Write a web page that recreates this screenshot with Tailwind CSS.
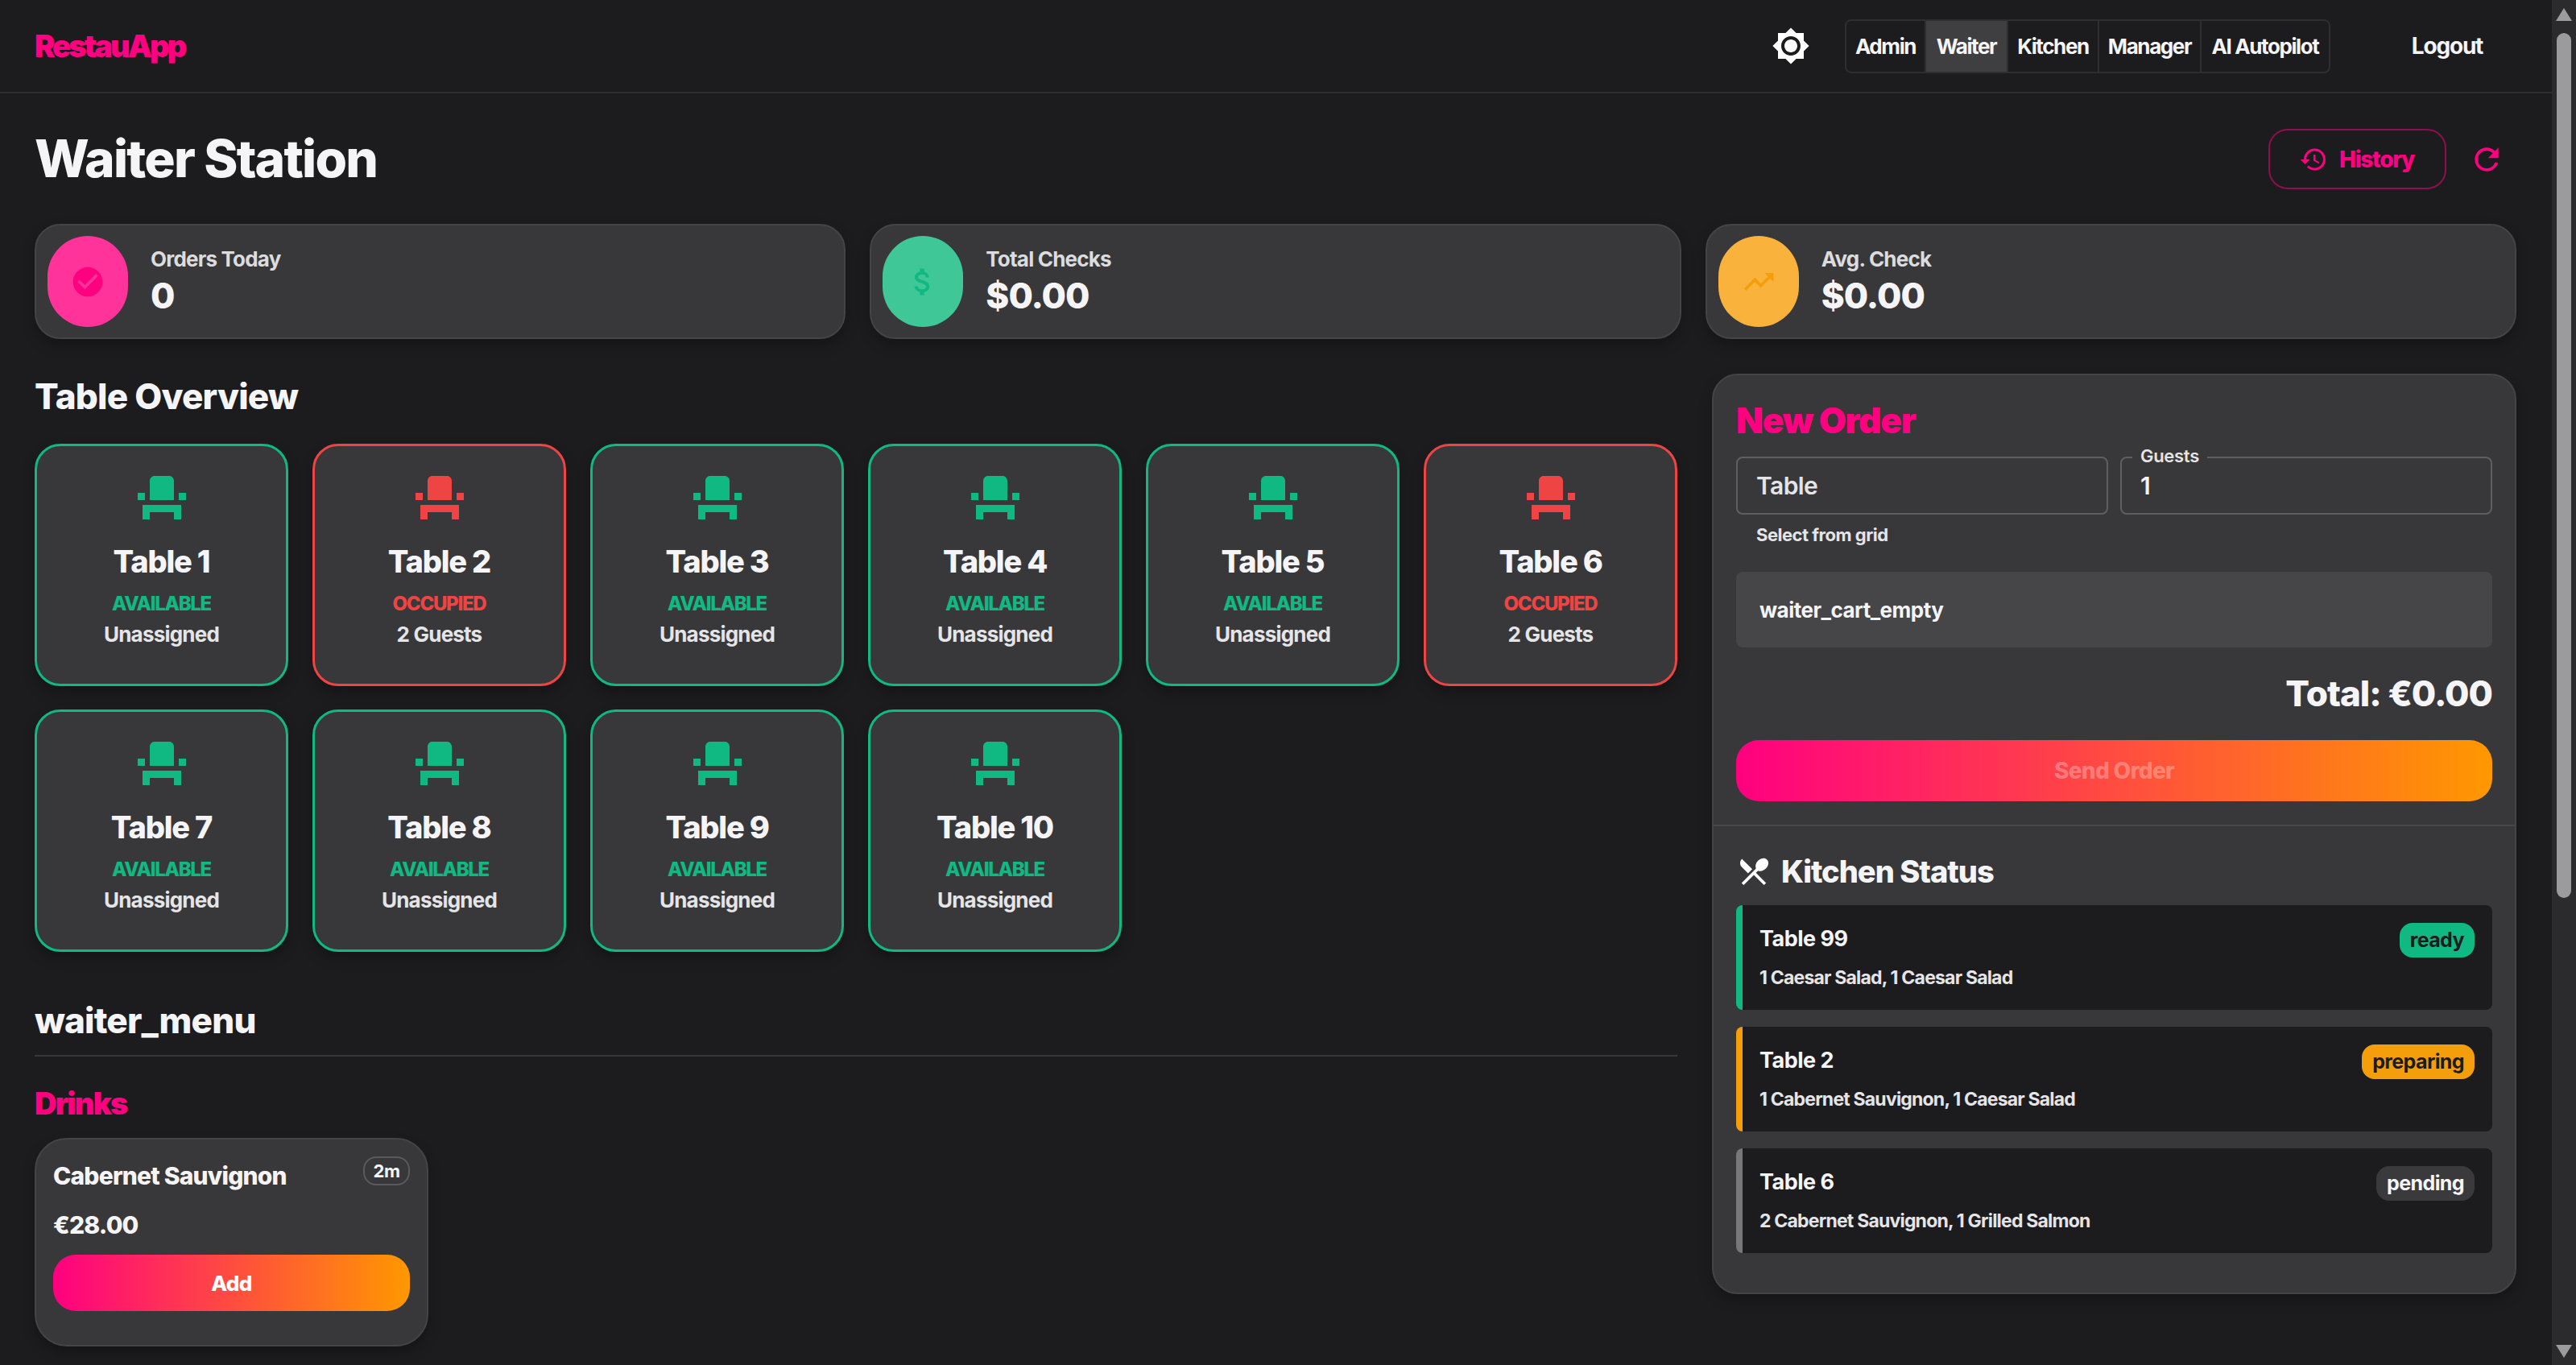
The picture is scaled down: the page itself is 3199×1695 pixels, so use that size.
<!DOCTYPE html>
<html lang="en">
<head>
<meta charset="utf-8">
<title>RestauApp</title>
<script src="https://cdn.jsdelivr.net/npm/@tailwindcss/browser@4"></script>
</head>
<body class="m-0 flex h-[1695px] w-[3199px] overflow-hidden bg-[#1c1c1e] font-['Inter',sans-serif] text-[#f5f5f7]">
<div class="w-[3169px] shrink-0">
  <header class="flex h-[116px] items-center justify-between border-b-2 border-[#2e2e30] pl-[43px] pr-[44px]">
    <div class="text-[38px] font-black leading-[48px] tracking-[-2.9px] text-[#ff0080]">RestauApp</div>
    <div class="flex items-center">
      <svg class="h-[48px] w-[48px] fill-white" viewBox="0 0 24 24"><path d="M20 8.69V4h-4.69L12 .69 8.69 4H4v4.69L.69 12 4 15.31V20h4.69L12 23.31 15.31 20H20v-4.69L23.31 12 20 8.69zM12 18c-3.31 0-6-2.69-6-6s2.69-6 6-6 6 2.69 6 6-2.69 6-6 6zm0-10c-2.21 0-4 1.79-4 4s1.79 4 4 4 4-1.79 4-4-1.79-4-4-4z"/></svg>
      <div class="ml-[43px] flex h-[67px] items-stretch overflow-hidden rounded-[8px] border-2 border-[#2e2e30] text-[26px] font-bold tracking-[-1.4px]">
        <div class="flex w-[97px] items-center justify-center">Admin</div>
        <div class="flex w-[104px] items-center justify-center border-x-2 border-[#2e2e30] bg-[#3f3f41]">Waiter</div>
        <div class="flex w-[113px] items-center justify-center border-r-2 border-[#2e2e30]">Kitchen</div>
        <div class="flex w-[127px] items-center justify-center border-r-2 border-[#2e2e30]">Manager</div>
        <div class="flex w-[158px] items-center justify-center">AI Autopilot</div>
      </div>
      <div class="ml-[59px] w-[172px] text-center text-[28px] font-bold tracking-[-1.2px]">Logout</div>
    </div>
  </header>

  <main class="pl-[43px] pr-[44px] pt-[44px]">
    <div class="flex h-[75px] items-center justify-between">
      <h1 class="mb-[3px] text-[64px] font-extrabold leading-[75px] tracking-[-1.8px]">Waiter Station</h1>
      <div class="flex items-center pr-[15px]">
        <div class="flex h-[75px] w-[221px] items-center gap-[14px] rounded-[24px] border-2 border-[#ff0080]/50 pl-[36px] text-[28px] font-extrabold tracking-[-1.3px] text-[#ff0080]">
          <svg class="h-[36px] w-[36px] fill-[#ff0080]" viewBox="0 0 24 24"><path d="M13 3c-4.97 0-9 4.03-9 9H1l3.89 3.89.07.14L9 12H6c0-3.87 3.13-7 7-7s7 3.13 7 7-3.13 7-7 7c-1.93 0-3.68-.79-4.94-2.06l-1.42 1.42C8.27 19.99 10.51 21 13 21c4.97 0 9-4.03 9-9s-4.03-9-9-9zm-1 5v5l4.28 2.54.72-1.21-3.5-2.08V8H12z"/></svg>
          History
        </div>
        <svg class="ml-[28px] h-[44px] w-[44px] fill-[#ff0080]" viewBox="0 0 24 24"><path d="M17.65 6.35C16.2 4.9 14.21 4 12 4c-4.42 0-7.99 3.58-7.99 8s3.57 8 7.99 8c3.73 0 6.84-2.55 7.73-6h-2.08c-.82 2.33-3.04 4-5.65 4-3.31 0-6-2.69-6-6s2.69-6 6-6c1.66 0 3.14.69 4.22 1.78L13 11h7V4l-2.35 2.35z"/></svg>
      </div>
    </div>

    <div class="mt-[43px] grid grid-cols-3 gap-[30px]">
      <div class="flex h-[143px] items-stretch gap-[28px] rounded-[32px] border-2 border-[#444446] bg-[#38383a] px-[14px] py-[13px] shadow-[0_8px_16px_rgba(0,0,0,0.25)]">
        <div class="flex w-[100px] items-center justify-center rounded-full bg-[#ff3399]">
          <svg class="h-[44px] w-[44px] fill-[#ff0080]" viewBox="0 0 24 24"><path d="M12 2C6.48 2 2 6.48 2 12s4.48 10 10 10 10-4.48 10-10S17.52 2 12 2zm-2 15-5-5 1.41-1.41L10 14.17l7.59-7.59L19 8l-9 9z"/></svg>
        </div>
        <div class="flex flex-col justify-center pb-[2px]">
          <div class="text-[26px] font-bold leading-[34px] tracking-[-0.8px] text-[#dcdcde]">Orders Today</div>
          <div class="mt-[2px] text-[44px] font-extrabold leading-[52px] tracking-[-1px]">0</div>
        </div>
      </div>
      <div class="flex h-[143px] items-stretch gap-[28px] rounded-[32px] border-2 border-[#444446] bg-[#38383a] px-[14px] py-[13px] shadow-[0_8px_16px_rgba(0,0,0,0.25)]">
        <div class="flex w-[100px] items-center justify-center rounded-full bg-[#40c797]">
          <svg class="h-[44px] w-[44px] fill-[#10b981]" viewBox="0 0 24 24"><path d="M11.8 10.9c-2.27-.59-3-1.2-3-2.15 0-1.09 1.01-1.85 2.7-1.85 1.78 0 2.44.85 2.5 2.1h2.21c-.07-1.72-1.12-3.3-3.21-3.81V3h-3v2.16c-1.94.42-3.5 1.68-3.5 3.61 0 2.31 1.91 3.46 4.7 4.13 2.5.6 3 1.48 3 2.41 0 .69-.49 1.79-2.7 1.79-2.06 0-2.87-.92-2.98-2.1h-2.2c.12 2.19 1.76 3.42 3.68 3.83V21h3v-2.15c1.95-.37 3.5-1.5 3.5-3.55 0-2.84-2.43-3.81-4.7-4.4z"/></svg>
        </div>
        <div class="flex flex-col justify-center pb-[2px]">
          <div class="text-[26px] font-bold leading-[34px] tracking-[-0.8px] text-[#dcdcde]">Total Checks</div>
          <div class="mt-[2px] text-[44px] font-extrabold leading-[52px] tracking-[-1px]">$0.00</div>
        </div>
      </div>
      <div class="flex h-[143px] items-stretch gap-[28px] rounded-[32px] border-2 border-[#444446] bg-[#38383a] px-[14px] py-[13px] shadow-[0_8px_16px_rgba(0,0,0,0.25)]">
        <div class="flex w-[100px] items-center justify-center rounded-full bg-[#f9b23c]">
          <svg class="h-[44px] w-[44px] fill-[#f59e0b]" viewBox="0 0 24 24"><path d="m16 6 2.29 2.29-4.88 4.88-4-4L2 16.59 3.41 18l6-6 4 4 6.3-6.29L22 12V6z"/></svg>
        </div>
        <div class="flex flex-col justify-center pb-[2px]">
          <div class="text-[26px] font-bold leading-[34px] tracking-[-0.8px] text-[#dcdcde]">Avg. Check</div>
          <div class="mt-[2px] text-[44px] font-extrabold leading-[52px] tracking-[-1px]">$0.00</div>
        </div>
      </div>
    </div>

    <div class="mt-[43px] grid grid-cols-[2040px_999px] gap-[43px]">
      <section>
        <h2 class="text-[44px] font-extrabold leading-[56px] tracking-[-0.8px]">Table Overview</h2>
        <div class="mt-[31px] grid grid-cols-6 gap-x-[30px] gap-y-[29px]">
          <div class="flex h-[301px] flex-col items-center rounded-[32px] border-[3px] border-[#10b981] bg-[#38383a] pt-[28px] shadow-[0_8px_16px_rgba(0,0,0,0.25)]">
            <svg class="h-[72px] w-[72px] fill-[#10b981]" viewBox="0 0 24 24"><path d="M4 18v3h3v-3h10v3h3v-6H4zm15-8h3v3h-3zM2 10h3v3H2zm15 3H7V5c0-1.1.9-2 2-2h6c1.1 0 2 .9 2 2v8z"/></svg>
            <div class="mt-[19px] text-[38px] font-extrabold leading-[48px] tracking-[-1.2px]">Table 1</div>
            <div class="mt-[13px] text-[24px] font-extrabold leading-[32px] tracking-[-1.3px] text-[#10b981]">AVAILABLE</div>
            <div class="mt-[4px] text-[26px] font-bold leading-[36px] tracking-[-0.8px] text-[#e5e5e7]">Unassigned</div>
          </div>
          <div class="flex h-[301px] flex-col items-center rounded-[32px] border-[3px] border-[#ef4444] bg-[#38383a] pt-[28px] shadow-[0_8px_16px_rgba(0,0,0,0.25)]">
            <svg class="h-[72px] w-[72px] fill-[#ef4444]" viewBox="0 0 24 24"><path d="M4 18v3h3v-3h10v3h3v-6H4zm15-8h3v3h-3zM2 10h3v3H2zm15 3H7V5c0-1.1.9-2 2-2h6c1.1 0 2 .9 2 2v8z"/></svg>
            <div class="mt-[19px] text-[38px] font-extrabold leading-[48px] tracking-[-1.2px]">Table 2</div>
            <div class="mt-[13px] text-[24px] font-extrabold leading-[32px] tracking-[-1.3px] text-[#ef4444]">OCCUPIED</div>
            <div class="mt-[4px] text-[26px] font-bold leading-[36px] tracking-[-0.8px] text-[#e5e5e7]">2 Guests</div>
          </div>
          <div class="flex h-[301px] flex-col items-center rounded-[32px] border-[3px] border-[#10b981] bg-[#38383a] pt-[28px] shadow-[0_8px_16px_rgba(0,0,0,0.25)]">
            <svg class="h-[72px] w-[72px] fill-[#10b981]" viewBox="0 0 24 24"><path d="M4 18v3h3v-3h10v3h3v-6H4zm15-8h3v3h-3zM2 10h3v3H2zm15 3H7V5c0-1.1.9-2 2-2h6c1.1 0 2 .9 2 2v8z"/></svg>
            <div class="mt-[19px] text-[38px] font-extrabold leading-[48px] tracking-[-1.2px]">Table 3</div>
            <div class="mt-[13px] text-[24px] font-extrabold leading-[32px] tracking-[-1.3px] text-[#10b981]">AVAILABLE</div>
            <div class="mt-[4px] text-[26px] font-bold leading-[36px] tracking-[-0.8px] text-[#e5e5e7]">Unassigned</div>
          </div>
          <div class="flex h-[301px] flex-col items-center rounded-[32px] border-[3px] border-[#10b981] bg-[#38383a] pt-[28px] shadow-[0_8px_16px_rgba(0,0,0,0.25)]">
            <svg class="h-[72px] w-[72px] fill-[#10b981]" viewBox="0 0 24 24"><path d="M4 18v3h3v-3h10v3h3v-6H4zm15-8h3v3h-3zM2 10h3v3H2zm15 3H7V5c0-1.1.9-2 2-2h6c1.1 0 2 .9 2 2v8z"/></svg>
            <div class="mt-[19px] text-[38px] font-extrabold leading-[48px] tracking-[-1.2px]">Table 4</div>
            <div class="mt-[13px] text-[24px] font-extrabold leading-[32px] tracking-[-1.3px] text-[#10b981]">AVAILABLE</div>
            <div class="mt-[4px] text-[26px] font-bold leading-[36px] tracking-[-0.8px] text-[#e5e5e7]">Unassigned</div>
          </div>
          <div class="flex h-[301px] flex-col items-center rounded-[32px] border-[3px] border-[#10b981] bg-[#38383a] pt-[28px] shadow-[0_8px_16px_rgba(0,0,0,0.25)]">
            <svg class="h-[72px] w-[72px] fill-[#10b981]" viewBox="0 0 24 24"><path d="M4 18v3h3v-3h10v3h3v-6H4zm15-8h3v3h-3zM2 10h3v3H2zm15 3H7V5c0-1.1.9-2 2-2h6c1.1 0 2 .9 2 2v8z"/></svg>
            <div class="mt-[19px] text-[38px] font-extrabold leading-[48px] tracking-[-1.2px]">Table 5</div>
            <div class="mt-[13px] text-[24px] font-extrabold leading-[32px] tracking-[-1.3px] text-[#10b981]">AVAILABLE</div>
            <div class="mt-[4px] text-[26px] font-bold leading-[36px] tracking-[-0.8px] text-[#e5e5e7]">Unassigned</div>
          </div>
          <div class="flex h-[301px] flex-col items-center rounded-[32px] border-[3px] border-[#ef4444] bg-[#38383a] pt-[28px] shadow-[0_8px_16px_rgba(0,0,0,0.25)]">
            <svg class="h-[72px] w-[72px] fill-[#ef4444]" viewBox="0 0 24 24"><path d="M4 18v3h3v-3h10v3h3v-6H4zm15-8h3v3h-3zM2 10h3v3H2zm15 3H7V5c0-1.1.9-2 2-2h6c1.1 0 2 .9 2 2v8z"/></svg>
            <div class="mt-[19px] text-[38px] font-extrabold leading-[48px] tracking-[-1.2px]">Table 6</div>
            <div class="mt-[13px] text-[24px] font-extrabold leading-[32px] tracking-[-1.3px] text-[#ef4444]">OCCUPIED</div>
            <div class="mt-[4px] text-[26px] font-bold leading-[36px] tracking-[-0.8px] text-[#e5e5e7]">2 Guests</div>
          </div>
          <div class="flex h-[301px] flex-col items-center rounded-[32px] border-[3px] border-[#10b981] bg-[#38383a] pt-[28px] shadow-[0_8px_16px_rgba(0,0,0,0.25)]">
            <svg class="h-[72px] w-[72px] fill-[#10b981]" viewBox="0 0 24 24"><path d="M4 18v3h3v-3h10v3h3v-6H4zm15-8h3v3h-3zM2 10h3v3H2zm15 3H7V5c0-1.1.9-2 2-2h6c1.1 0 2 .9 2 2v8z"/></svg>
            <div class="mt-[19px] text-[38px] font-extrabold leading-[48px] tracking-[-1.2px]">Table 7</div>
            <div class="mt-[13px] text-[24px] font-extrabold leading-[32px] tracking-[-1.3px] text-[#10b981]">AVAILABLE</div>
            <div class="mt-[4px] text-[26px] font-bold leading-[36px] tracking-[-0.8px] text-[#e5e5e7]">Unassigned</div>
          </div>
          <div class="flex h-[301px] flex-col items-center rounded-[32px] border-[3px] border-[#10b981] bg-[#38383a] pt-[28px] shadow-[0_8px_16px_rgba(0,0,0,0.25)]">
            <svg class="h-[72px] w-[72px] fill-[#10b981]" viewBox="0 0 24 24"><path d="M4 18v3h3v-3h10v3h3v-6H4zm15-8h3v3h-3zM2 10h3v3H2zm15 3H7V5c0-1.1.9-2 2-2h6c1.1 0 2 .9 2 2v8z"/></svg>
            <div class="mt-[19px] text-[38px] font-extrabold leading-[48px] tracking-[-1.2px]">Table 8</div>
            <div class="mt-[13px] text-[24px] font-extrabold leading-[32px] tracking-[-1.3px] text-[#10b981]">AVAILABLE</div>
            <div class="mt-[4px] text-[26px] font-bold leading-[36px] tracking-[-0.8px] text-[#e5e5e7]">Unassigned</div>
          </div>
          <div class="flex h-[301px] flex-col items-center rounded-[32px] border-[3px] border-[#10b981] bg-[#38383a] pt-[28px] shadow-[0_8px_16px_rgba(0,0,0,0.25)]">
            <svg class="h-[72px] w-[72px] fill-[#10b981]" viewBox="0 0 24 24"><path d="M4 18v3h3v-3h10v3h3v-6H4zm15-8h3v3h-3zM2 10h3v3H2zm15 3H7V5c0-1.1.9-2 2-2h6c1.1 0 2 .9 2 2v8z"/></svg>
            <div class="mt-[19px] text-[38px] font-extrabold leading-[48px] tracking-[-1.2px]">Table 9</div>
            <div class="mt-[13px] text-[24px] font-extrabold leading-[32px] tracking-[-1.3px] text-[#10b981]">AVAILABLE</div>
            <div class="mt-[4px] text-[26px] font-bold leading-[36px] tracking-[-0.8px] text-[#e5e5e7]">Unassigned</div>
          </div>
          <div class="flex h-[301px] flex-col items-center rounded-[32px] border-[3px] border-[#10b981] bg-[#38383a] pt-[28px] shadow-[0_8px_16px_rgba(0,0,0,0.25)]">
            <svg class="h-[72px] w-[72px] fill-[#10b981]" viewBox="0 0 24 24"><path d="M4 18v3h3v-3h10v3h3v-6H4zm15-8h3v3h-3zM2 10h3v3H2zm15 3H7V5c0-1.1.9-2 2-2h6c1.1 0 2 .9 2 2v8z"/></svg>
            <div class="mt-[19px] text-[38px] font-extrabold leading-[48px] tracking-[-1.2px]">Table 10</div>
            <div class="mt-[13px] text-[24px] font-extrabold leading-[32px] tracking-[-1.3px] text-[#10b981]">AVAILABLE</div>
            <div class="mt-[4px] text-[26px] font-bold leading-[36px] tracking-[-0.8px] text-[#e5e5e7]">Unassigned</div>
          </div>
        </div>

        <h2 class="mt-[57px] border-b-2 border-[#38383a] pb-[15px] text-[44px] font-extrabold leading-[56px] tracking-[-0.8px]">waiter_menu</h2>
        <h3 class="mt-[34px] text-[38px] font-black leading-[48px] tracking-[-1.8px] text-[#ff0080]">Drinks</h3>
        <div class="mt-[19px] h-[259px] w-[489px] rounded-[40px] border-2 border-[#444446] bg-[#38383a] px-[21px] pt-[21px] shadow-[0_8px_16px_rgba(0,0,0,0.25)]">
          <div class="flex items-start justify-between">
            <div class="mt-[4px] text-[30px] font-extrabold leading-[40px] tracking-[-0.8px]">Cabernet Sauvignon</div>
            <div class="flex h-[36px] w-[58px] items-center justify-center rounded-[16px] border-2 border-[#5a5a5c] text-[22px] font-bold tracking-[-0.5px]">2m</div>
          </div>
          <div class="mt-[21px] text-[30px] font-extrabold leading-[40px] tracking-[-0.8px]">€28.00</div>
          <div class="mt-[17px] flex h-[70px] items-center justify-center rounded-[28px] bg-[linear-gradient(90deg,#ff0080,#ff9800)] text-[26px] font-extrabold tracking-[-0.6px] text-white">Add</div>
        </div>
      </section>

      <aside class="h-[1143px] rounded-[32px] border-2 border-[#444446] bg-[#38383a] shadow-[0_8px_16px_rgba(0,0,0,0.25)]">
        <div class="px-[28px] pt-[28px]">
          <h2 class="text-[44px] font-black leading-[56px] tracking-[-1.2px] text-[#ff0080]">New Order</h2>
          <div class="mt-[17px] grid grid-cols-2 gap-[15px]">
            <div class="flex h-[72px] items-center rounded-[8px] border-2 border-[#5f5f61] pl-[23px] text-[30px] font-semibold tracking-[-0.6px] text-[#e5e5e7]">Table</div>
            <div class="relative flex h-[72px] items-center rounded-[8px] border-2 border-[#5f5f61] pl-[23px] text-[30px] font-semibold">1
              <span class="absolute left-[13px] top-[-17px] bg-[#38383a] px-[10px] text-[22px] font-semibold leading-[28px] tracking-[-0.3px] text-[#e5e5e7]">Guests</span>
            </div>
          </div>
          <div class="mt-[9px] pl-[25px] text-[22px] font-bold leading-[32px] tracking-[-0.5px] text-[#e5e5e7]">Select from grid</div>
          <div class="mt-[30px] flex h-[94px] items-center rounded-[8px] bg-[#464648] pl-[29px] text-[26px] font-bold tracking-[-0.5px]">waiter_cart_empty</div>
          <div class="mt-[29px] text-right text-[44px] font-extrabold leading-[56px] tracking-[-1px]">Total: €0.00</div>
          <div class="mt-[30px] flex h-[76px] items-center justify-center rounded-[28px] bg-[linear-gradient(90deg,#ff0080,#ff9800)] text-[28px] font-extrabold tracking-[-0.7px] text-white/30">Send Order</div>
        </div>
        <div class="mt-[29px] border-t-2 border-[#48484a] px-[28px] pt-[32px]">
          <div class="flex items-center gap-[12px] text-[38px] font-extrabold leading-[48px] tracking-[-1px]">
            <svg class="h-[44px] w-[44px] fill-white" viewBox="0 0 24 24"><path d="m8.1 13.34 2.83-2.83L3.91 3.5c-1.56 1.56-1.56 4.09 0 5.66zm6.78-1.81c1.53.71 3.68.21 5.27-1.38 1.91-1.91 2.28-4.65.81-6.12-1.46-1.46-4.2-1.1-6.12.81-1.59 1.59-2.09 3.74-1.38 5.27L3.7 19.87l1.41 1.41L12 14.41l6.88 6.88 1.41-1.41L13.41 13z"/></svg>
            Kitchen Status
          </div>
          <div class="mt-[18px] flex flex-col gap-[21px]">
            <div class="flex h-[130px] justify-between rounded-[8px] border-l-[8px] border-[#10b981] bg-[#1c1c1e] pl-[21px] pr-[22px] pt-[24px]">
              <div>
                <div class="text-[27px] font-bold leading-[36px] tracking-[-0.5px]">Table 99</div>
                <div class="mt-[14px] text-[23px] font-bold leading-[32px] tracking-[-0.8px] text-[#e5e5e7]">1 Caesar Salad, 1 Caesar Salad</div>
              </div>
              <div class="-mt-[2px] flex h-[43px] items-center rounded-[16px] bg-[#10b981] px-[13px] text-[25px] font-bold tracking-[-0.6px] text-[#1c1c1e]">ready</div>
            </div>
            <div class="flex h-[130px] justify-between rounded-[8px] border-l-[8px] border-[#f59e0b] bg-[#1c1c1e] pl-[21px] pr-[22px] pt-[24px]">
              <div>
                <div class="text-[27px] font-bold leading-[36px] tracking-[-0.5px]">Table 2</div>
                <div class="mt-[14px] text-[23px] font-bold leading-[32px] tracking-[-0.8px] text-[#e5e5e7]">1 Cabernet Sauvignon, 1 Caesar Salad</div>
              </div>
              <div class="-mt-[2px] flex h-[43px] items-center rounded-[16px] bg-[#f59e0b] px-[13px] text-[25px] font-bold tracking-[-0.6px] text-[#1c1c1e]">preparing</div>
            </div>
            <div class="flex h-[130px] justify-between rounded-[8px] border-l-[8px] border-[#77777a] bg-[#1c1c1e] pl-[21px] pr-[22px] pt-[24px]">
              <div>
                <div class="text-[27px] font-bold leading-[36px] tracking-[-0.5px]">Table 6</div>
                <div class="mt-[14px] text-[23px] font-bold leading-[32px] tracking-[-0.8px] text-[#e5e5e7]">2 Cabernet Sauvignon, 1 Grilled Salmon</div>
              </div>
              <div class="-mt-[2px] flex h-[43px] items-center rounded-[16px] bg-[#3a3a3c] px-[13px] text-[25px] font-bold tracking-[-0.6px] text-[#f5f5f7]">pending</div>
            </div>
          </div>
        </div>
      </aside>
    </div>
  </main>
</div>

<div class="flex w-[30px] shrink-0 flex-col items-center bg-[#2b2b2d] pt-[10px]">
  <svg class="h-[16px] w-[20px] fill-[#9b9b9b]" viewBox="0 0 20 16"><path d="M10 0 20 16H0z"/></svg>
  <div class="mt-[15px] h-[1074px] w-[18px] rounded-full bg-[#9b9b9b]"></div>
  <svg class="mt-[555px] h-[16px] w-[20px] fill-[#9b9b9b]" viewBox="0 0 20 16"><path d="M0 0H20L10 16z"/></svg>
</div>
</body>
</html>
